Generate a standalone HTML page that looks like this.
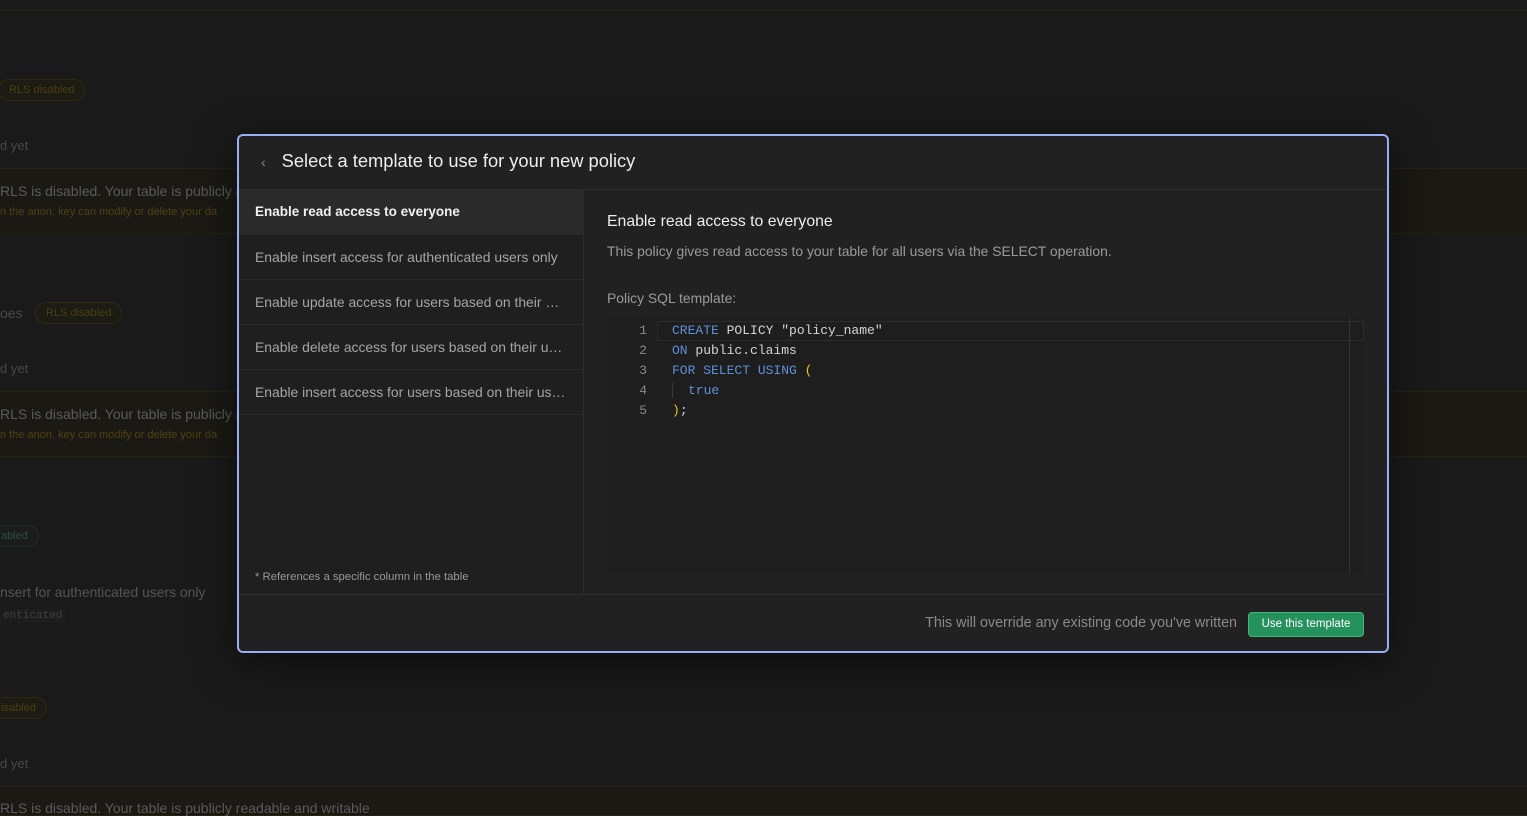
<!DOCTYPE html>
<html><head><meta charset="utf-8"><style>
*{box-sizing:border-box;margin:0;padding:0}
body{width:1527px;height:810px;background:#1a1a1a;font-family:"Liberation Sans",sans-serif;position:relative;overflow:hidden;color:#ededed}
.a{position:absolute;white-space:nowrap}
.bg{color:#484848;font-size:13px}
.pill{position:absolute;border:1px solid #2e2910;border-radius:12px;color:#4a400f;font-size:11px;padding:4px 10px;background:#1c1b14}
.warn{position:absolute;left:0;width:1527px;background:#1a1914;border-top:1px solid #262212;border-bottom:1px solid #262212}
.modal{position:absolute;left:237px;top:134px;width:1152px;height:519px;border:2px solid #98aef5;border-radius:6px;background:#212121;overflow:hidden;box-shadow:0 10px 40px rgba(0,0,0,.5)}
.hdr{height:54px;border-bottom:1px solid #2c2c2c;display:flex;align-items:center}
.left{position:absolute;left:0;top:54px;width:345px;height:404px;border-right:1px solid #2c2c2c;background:#1f1f1f}
.item{height:45px;border-bottom:1px solid #2a2a2a;padding-left:16px;font-size:13.9px;color:#a5a5a5;line-height:44px}
.item.sel{background:#2a2a2a;color:#f0f0f0;font-weight:bold;font-size:13.5px}
.code{position:absolute;left:368px;top:182px;width:757px;height:256px;background:#1e1e1e;font-family:"Liberation Mono",monospace;font-size:13px}
.ln{position:absolute;left:0;width:40px;text-align:right;color:#8a8a8a}
.cl{position:absolute;left:65px;color:#d4d4d4}
.k{color:#5f8fd8}.y{color:#e8c800}
</style></head><body>
<div class="a" style="left:0;top:10px;width:1527px;border-top:1px solid #252010"></div>
<div class="pill" style="left:-2px;top:79px">RLS disabled</div>
<div class="a bg" style="left:0;top:138px">d yet</div>
<div class="warn" style="top:168px;height:66px"></div>
<div class="a" style="left:0;top:183px;color:#5a5a5a;font-size:14px">RLS is disabled. Your table is publicly r</div>
<div class="a" style="left:0;top:206px;color:#4e4112;font-size:11px">n the anon. key can modify or delete your da</div>
<div class="a bg" style="left:0;top:305px;font-size:14px">oes</div>
<div class="pill" style="left:35px;top:302px">RLS disabled</div>
<div class="a bg" style="left:0;top:361px">d yet</div>
<div class="warn" style="top:391px;height:66px"></div>
<div class="a" style="left:0;top:406px;color:#5a5a5a;font-size:14px">RLS is disabled. Your table is publicly r</div>
<div class="a" style="left:0;top:429px;color:#4e4112;font-size:11px">n the anon. key can modify or delete your da</div>
<div class="pill" style="left:-10px;top:525px;border-color:#1a2e22;color:#28503a;background:#1a1d1b">abled</div>
<div class="a" style="left:0;top:584px;color:#545454;font-size:13.9px">nsert for authenticated users only</div>
<div class="a" style="left:0;top:609px;color:#404040;font-size:11px;font-family:'Liberation Mono',monospace;background:#1d1d1d;padding:1px 3px">enticated</div>
<div class="pill" style="left:-10px;top:697px">isabled</div>
<div class="a bg" style="left:0;top:756px">d yet</div>
<div class="warn" style="top:786px;height:30px"></div>
<div class="a" style="left:0;top:800px;color:#5a5a5a;font-size:14px">RLS is disabled. Your table is publicly readable and writable</div>

<div class="modal">
 <div class="hdr"><span style="color:#888;font-size:14px;margin-left:22px;margin-top:-2px">‹</span><span style="font-size:18.3px;margin-left:16px;color:#ededed;margin-top:-3px">Select a template to use for your new policy</span></div>
 <div class="left">
  <div class="item sel">Enable read access to everyone</div>
  <div class="item">Enable insert access for authenticated users only</div>
  <div class="item">Enable update access for users based on their …</div>
  <div class="item">Enable delete access for users based on their u…</div>
  <div class="item">Enable insert access for users based on their us…</div>
  <div class="a" style="left:16px;top:381px;font-size:11.3px;color:#999">* References a specific column in the table</div>
 </div>
 <div class="a" style="left:368px;top:77px;font-size:15.8px;color:#ededed">Enable read access to everyone</div>
 <div class="a" style="left:368px;top:107px;font-size:13.9px;color:#9a9a9a">This policy gives read access to your table for all users via the SELECT operation.</div>
 <div class="a" style="left:368px;top:154px;font-size:13.9px;color:#9a9a9a">Policy SQL template:</div>
 <div class="code">
  <div class="a" style="left:50px;top:3px;width:707px;height:20px;border:1px solid #2c2c2c"></div>
  <div class="a" style="left:742px;top:0;height:256px;border-left:1px solid #333"></div>
  <div class="ln" style="top:5px">1</div><div class="cl" style="top:5px"><span class="k">CREATE</span> POLICY "policy_name"</div>
  <div class="ln" style="top:25px">2</div><div class="cl" style="top:25px"><span class="k">ON</span> public.claims</div>
  <div class="ln" style="top:45px">3</div><div class="cl" style="top:45px"><span class="k">FOR SELECT USING</span> <span class="y">(</span></div>
  <div class="ln" style="top:65px">4</div><div class="cl" style="top:65px;border-left:1px solid #3a3a3a;padding-left:15px"><span class="k">true</span></div>
  <div class="ln" style="top:85px">5</div><div class="cl" style="top:85px"><span class="y">)</span>;</div>
 </div>
 <div class="a" style="left:0;top:458px;width:1152px;border-top:1px solid #2e2e2e"></div>
 <div class="a" style="right:150px;top:479px;font-size:14.3px;color:#8a8a8a">This will override any existing code you've written</div>
 <div class="a" style="left:1009px;top:476px;width:116px;height:25px;background:#25915c;border:1px solid #3fb87a;border-radius:4px;color:#fff;font-size:11.5px;text-align:center;line-height:23px">Use this template</div>
</div>
</body></html>
